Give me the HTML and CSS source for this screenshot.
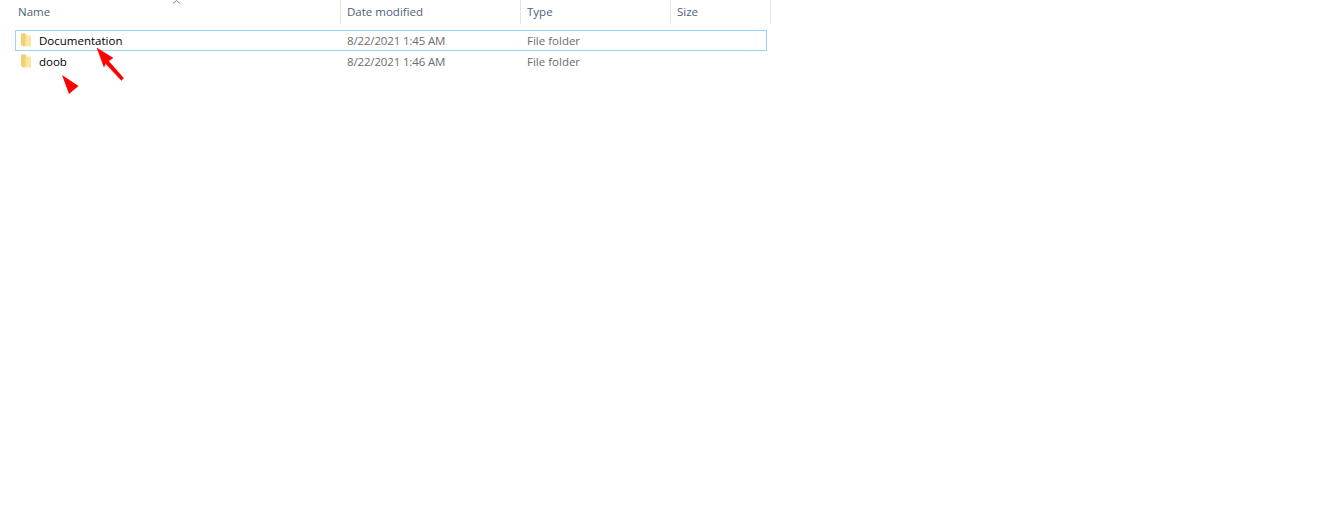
FILE: index.html
```html
<!DOCTYPE html>
<html lang="en">
<head>
<meta charset="utf-8">
<title>Documentation folder listing</title>
<link rel="stylesheet" href="styles.css">
</head>
<body>
<div class="explorer">
  <div class="header">
    <div class="col col-name head-cell">Name</div>
    <div class="col col-date head-cell">Date modified</div>
    <div class="col col-type head-cell">Type</div>
    <div class="col col-size head-cell">Size</div>
  </div>
  <div class="rows">
    <div class="row selected">
      <div class="cell-name">
        <svg class="folder" width="12" height="15" viewBox="0 0 12 15"><path d="M1 0.500h5l1 2h4v11H4l-3-1.500z" fill="#fbe5a3"/><path d="M1 0.500h4.500v11L4 13.500l-3-1.500z" fill="#f3cf72"/></svg>
        <span class="fname">Documentation</span>
      </div>
      <div class="cell-date">8/22/2021 1:45 AM</div>
      <div class="cell-type">File folder</div>
    </div>
    <div class="row">
      <div class="cell-name">
        <svg class="folder" width="12" height="15" viewBox="0 0 12 15"><path d="M1 0.500h5l1 2h4v11H4l-3-1.500z" fill="#fbe5a3"/><path d="M1 0.500h4.500v11L4 13.500l-3-1.500z" fill="#f3cf72"/></svg>
        <span class="fname">doob</span>
      </div>
      <div class="cell-date">8/22/2021 1:46 AM</div>
      <div class="cell-type">File folder</div>
    </div>
  </div>
  <svg class="overlay" width="200" height="100" viewBox="0 0 200 100">
    <path d="M173 3.500L176.500 0.500L180 3.500" fill="none" stroke="#8a8a8a" stroke-width="1"/>
    <path d="M97 48L113 58L108.500 61L123.500 78L121.500 80.500L105.500 63.500L104 67Z" fill="#f00" stroke="#f00" stroke-width="0.500" stroke-linejoin="round"/>
    <path d="M62 75L78.500 86L69 94Z" fill="#f00"/>
  </svg>
</div>
</body>
</html>
```
FILE: styles.css
```css
html, body {
  margin: 0;
  padding: 0;
  background: #fff;
}
.explorer {
  position: relative;
  width: 1324px;
  height: 530px;
  overflow: hidden;
  font-family: "Open Sans", "Noto Sans", sans-serif;
  font-size: 11.5px;
  color: #000;
}
.header {
  display: flex;
  height: 24px;
}
.col {
  box-sizing: border-box;
  border-right: 1px solid #e5e5e5;
  padding-left: 6px;
  line-height: 24px;
  color: #4c607a;
}
.col-name { width: 341px; padding-left: 18px; }
.col-date { width: 180px; }
.col-type { width: 150px; }
.col-size { width: 100px; }
.rows {
  display: flex;
  flex-direction: column;
  padding: 6px 0 0 15px;
}
.row {
  box-sizing: border-box;
  display: flex;
  width: 752px;
  height: 21px;
  line-height: 19px;
  border: 1px solid transparent;
}
.row.selected {
  border-color: #99d1ff;
}
.cell-name {
  display: flex;
  align-items: center;
  width: 325px;
  padding-left: 4px;
  box-sizing: border-box;
}
.folder {
  flex: none;
  margin-right: 7px;
}
.fname { color: #000; }
.cell-date {
  width: 180px;
  padding-left: 6px;
  box-sizing: border-box;
  color: #6d6d6d;
  letter-spacing: -0.15px;
}
.cell-type {
  width: 150px;
  padding-left: 6px;
  box-sizing: border-box;
  color: #6d6d6d;
}
.overlay {
  position: absolute;
  left: 0;
  top: 0;
}
```
